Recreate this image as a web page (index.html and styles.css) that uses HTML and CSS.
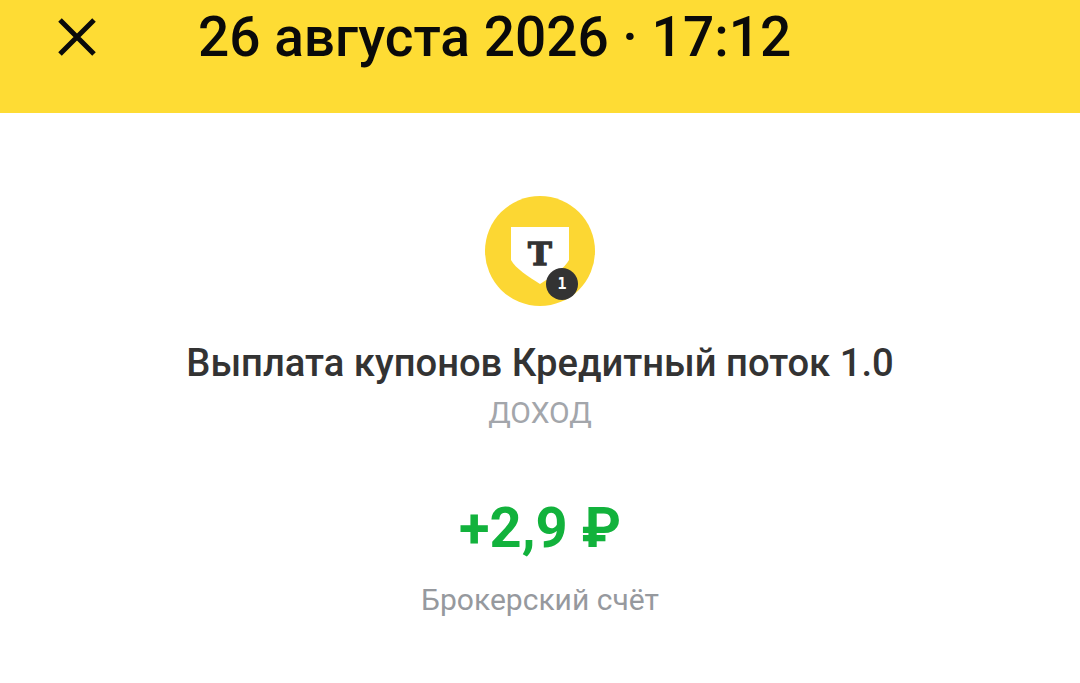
FILE: index.html
```html
<!DOCTYPE html>
<html>
<head>
    <title>Операция</title>
    <meta charset="utf-8">
    <link rel="stylesheet" href="styles.css">
</head>
<body>
    <header class="top-bar">
        <svg class="close-icon" width="40" height="40" viewBox="0 0 40 40">
            <path d="M3 3 L37 37 M37 3 L3 37" stroke="#0a0a0a" stroke-width="5" fill="none"/>
        </svg>
        <div class="top-date">26 августа 2026 · 17:12</div>
    </header>
    <main class="content">
        <div class="logo">
            <svg class="shield" width="58" height="57" viewBox="0 0 58 57">
                <path d="M0 0 H58 V33 C54 41 40 50 29 57 C18 50 4 41 0 33 Z" fill="#fff"/>
            </svg>
            <span class="logo-letter">Т</span>
            <span class="logo-badge">1</span>
        </div>
        <div class="title">Выплата купонов Кредитный поток 1.0</div>
        <div class="category">ДОХОД</div>
        <div class="amount">+2,9 ₽</div>
        <div class="account">Брокерский счёт</div>
    </main>
</body>
</html>
```

FILE: styles.css
```css
body {
    margin: 0;
    background: white;
    font-family: Roboto, "Liberation Sans", sans-serif;
}

.top-bar {
    height: 113px;
    background: #fedc34;
    display: flex;
    align-items: flex-start;
    padding-left: 57px;
    box-sizing: border-box;
}

.close-icon {
    margin-top: 17px;
}

.top-date {
    margin-left: 101px;
    margin-top: 5px;
    font-size: 55px;
    line-height: 64px;
    font-weight: 500;
    color: #0a0a0a;
    white-space: nowrap;
}

.content {
    display: flex;
    flex-direction: column;
    align-items: center;
    padding-top: 83px;
}

.logo {
    position: relative;
    width: 110px;
    height: 110px;
    border-radius: 50%;
    background: #fcd733;
}

.shield {
    position: absolute;
    left: 26px;
    top: 31px;
}

.logo-letter {
    position: absolute;
    left: 26px;
    width: 58px;
    top: 40px;
    text-align: center;
    font-family: "DejaVu Serif", serif;
    font-weight: bold;
    font-size: 32px;
    line-height: 36px;
    color: #333;
    -webkit-text-stroke: 1.4px #333;
}

.logo-badge {
    position: absolute;
    left: 61px;
    top: 72px;
    width: 32px;
    height: 32px;
    border-radius: 50%;
    background: #333;
    color: white;
    font-family: "DejaVu Sans Mono", monospace;
    font-size: 15px;
    font-weight: 700;
    line-height: 32px;
    text-align: center;
}

.title {
    margin-top: 35px;
    font-size: 38.2px;
    line-height: 44px;
    font-weight: 500;
    color: #333;
    white-space: nowrap;
}

.category {
    margin-top: 8px;
    font-size: 30px;
    line-height: 40px;
    color: #a3a6ab;
}

.amount {
    margin-top: 63px;
    font-size: 56px;
    line-height: 64px;
    font-weight: 700;
    color: #12b23c;
}

.account {
    margin-top: 22px;
    font-size: 30px;
    line-height: 36px;
    color: #96999e;
}
```
